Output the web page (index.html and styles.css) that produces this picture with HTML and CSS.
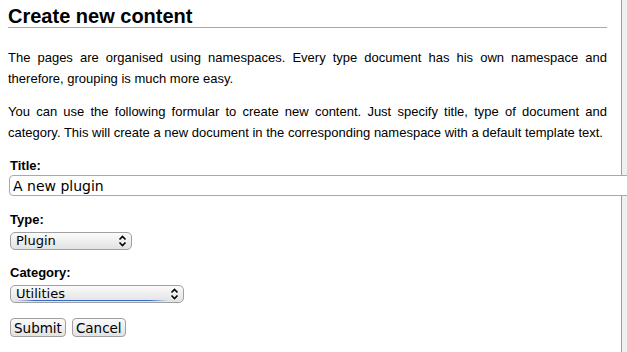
FILE: index.html
```html
<!DOCTYPE html>
<html>
<head>
<meta charset="utf-8">
<link rel="stylesheet" href="styles.css">
</head>
<body>
<div class="page">
  <main class="content">
    <h1 class="title">Create new content</h1>
    <p class="para">The pages are organised using namespaces. Every type document has his own namespace and therefore, grouping is much more easy.</p>
    <p class="para">You can use the following formular to create new content. Just specify title, type of document and category. This will create a new document in the corresponding namespace with a default template text.</p>
    <form class="form">
      <label class="label" for="t">Title:</label>
      <input class="text-input" id="t" type="text" value="A new plugin">
      <label class="label" for="ty">Type:</label>
      <select class="select select-type" id="ty"><option>Plugin</option></select>
      <label class="label" for="c">Category:</label>
      <select class="select select-cat focused" id="c"><option>Utilities</option></select>
      <div class="buttons">
        <button class="btn" type="button">Submit</button>
        <button class="btn" type="button">Cancel</button>
      </div>
    </form>
  </main>
  <aside class="side"></aside>
</div>
</body>
</html>
```
FILE: styles.css
```css
html, body {
  margin: 0;
  padding: 0;
  height: 100%;
}
body {
  background: #f0f0f0;
  font-family: "Liberation Sans", Arial, sans-serif;
  color: #000;
  overflow: hidden;
}
.page {
  display: flex;
  height: 100%;
}
.content {
  width: 599px;
  padding: 0 14px 0 8px;
  background: #fff;
  border-right: 1px solid #8aa3b3;
  flex: none;
}
.side {
  flex: 1;
  background: #f0f0f0;
}
.title {
  margin: 0;
  padding-top: 5px;
  font-size: 20px;
  line-height: 22px;
  font-weight: bold;
  border-bottom: 1px solid #8fb0c0;
}
.para {
  margin: 19px 0 0;
  font-size: 13px;
  line-height: 21px;
  text-align: justify;
}
.para + .para {
  margin-top: 12px;
}
.form {
  margin-top: 16px;
  display: flex;
  flex-direction: column;
  align-items: flex-start;
}
.label {
  font-weight: bold;
  font-size: 13px;
  line-height: 14px;
  padding-left: 2px;
}
.text-input {
  position: relative;
  z-index: 1;
  margin: 2px 0 0 1px;
  width: 640px;
  box-sizing: border-box;
  height: 21px;
  border: 1px solid #a9a9a9;
  border-radius: 4px;
  font-family: "DejaVu Sans", sans-serif;
  font-size: 14px;
  padding: 0 3px;
  color: #000;
  background: #fff;
  margin-bottom: 17px;
}
.select {
  -webkit-appearance: none;
  appearance: none;
  margin: 5px 0 0 2px;
  box-sizing: border-box;
  height: 18px;
  border: 1px solid #a0a0a0;
  border-radius: 5px;
  font-family: "DejaVu Sans", sans-serif;
  font-size: 13px;
  line-height: 16px;
  padding: 0 0 0 5px;
  color: #000;
  background-color: #ececec;
  background-image:
    url("data:image/svg+xml;utf8,<svg xmlns='http://www.w3.org/2000/svg' width='9' height='12' viewBox='0 0 9 12'><path d='M1.5 4.5 L4.5 1.5 L7.5 4.5 M1.5 7.5 L4.5 10.5 L7.5 7.5' fill='none' stroke='black' stroke-width='1.6'/></svg>"),
    linear-gradient(#fbfbfb, #e2e2e2);
  background-repeat: no-repeat, no-repeat;
  background-position: right 4px center, 0 0;
  margin-bottom: 16px;
}
.select-type {
  width: 122px;
}
.select-cat {
  width: 174px;
  margin-bottom: 15px;
}
.select.focused {
  background-image:
    url("data:image/svg+xml;utf8,<svg xmlns='http://www.w3.org/2000/svg' width='9' height='12' viewBox='0 0 9 12'><path d='M1.5 4.5 L4.5 1.5 L7.5 4.5 M1.5 7.5 L4.5 10.5 L7.5 7.5' fill='none' stroke='black' stroke-width='1.6'/></svg>"),
    linear-gradient(to right, rgba(60,110,200,0), #3c6ec8 12%, #3c6ec8 88%, rgba(60,110,200,0)),
    linear-gradient(#fbfbfb, #e2e2e2);
  background-repeat: no-repeat, no-repeat, no-repeat;
  background-size: auto, 152px 1px, auto;
  background-position: right 4px center, 5px 14px, 0 0;
}
.buttons {
  display: flex;
  gap: 6px;
  margin-left: 2px;
}
.btn {
  box-sizing: border-box;
  height: 19px;
  border: 1px solid #a0a0a0;
  border-radius: 4px;
  font-family: "DejaVu Sans", sans-serif;
  font-size: 13.5px;
  line-height: 16px;
  padding: 0 3px;
  color: #000;
  background: linear-gradient(#fafafa, #e2e2e2);
}
```
